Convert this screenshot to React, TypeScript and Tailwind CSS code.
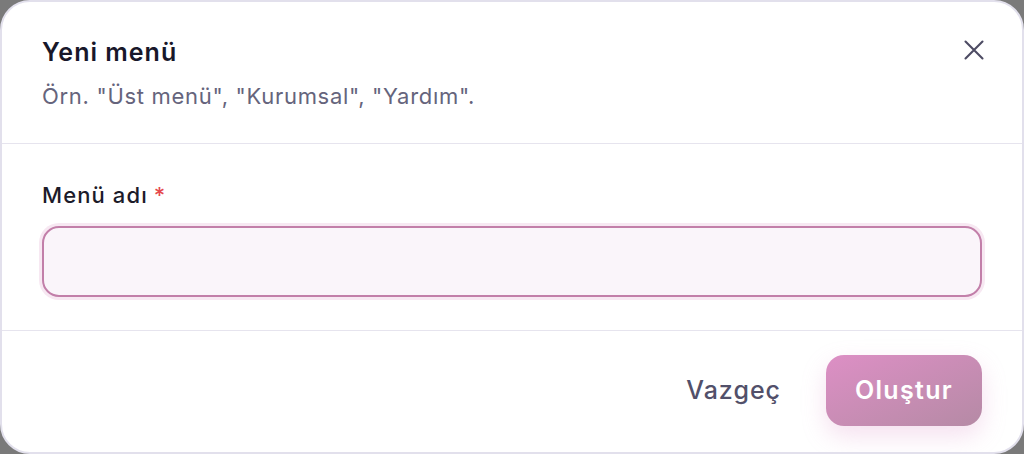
import React from 'react';

export default function App() {
  return (
    <div className="w-[1024px] h-[454px] bg-[#7a7a7a] font-['Inter',sans-serif]">
      <div className="w-full h-full bg-white border-2 border-[#e2e0ec] rounded-[30px] flex flex-col overflow-hidden">
        {/* Header */}
        <div className="flex items-start justify-between pl-10 pr-[38px] pt-[34px] pb-[32px] border-b border-[#e6e4ee]">
          <div>
            <h2 className="text-[25px] leading-[32px] font-semibold text-[#18172a] tracking-[1px]">Yeni menü</h2>
            <p className="mt-[13px] text-[22px] leading-[30px] text-[#65647c] tracking-[0.7px]">
              Örn. "Üst menü", "Kurumsal", "Yardım".
            </p>
          </div>
          <button className="mt-[4px] w-5 h-5 flex items-center justify-center text-[#4d4b63]">
            <svg width="20" height="20" viewBox="0 0 20 20" fill="none" stroke="currentColor" strokeWidth="2.1" strokeLinecap="round">
              <path d="M1.5 1.5l17 17M18.5 1.5l-17 17" />
            </svg>
          </button>
        </div>

        {/* Body */}
        <div className="px-10 pt-9 pb-[33px] border-b border-[#e6e4ee]">
          <label className="block text-[22px] leading-[30px] font-medium text-[#1c1b2a] tracking-[1.1px]">
            Menü adı<span className="ml-[6px] text-[#e5484d]">*</span>
          </label>
          <input
            className="mt-[16px] block w-full h-[71px] rounded-[17px] border-2 border-[#c27fa9] bg-[#faf5fa] px-5 text-[20px] outline-none shadow-[0_0_0_3px_#f7e8f2]"
          />
        </div>

        {/* Footer */}
        <div className="flex-1 flex items-start justify-end gap-[45px] pr-10 pt-[24px]">
          <button className="h-[71px] text-[25px] font-medium text-[#52506a] tracking-[1px]">Vazgeç</button>
          <button className="w-[156px] h-[71px] rounded-[18px] bg-gradient-to-br from-[#dd8fc5] to-[#b58aa5] text-white text-[25px] font-semibold tracking-[1.3px] shadow-[0_10px_24px_rgba(220,144,196,0.28)]">
            Oluştur
          </button>
        </div>
      </div>
    </div>
  );
}
